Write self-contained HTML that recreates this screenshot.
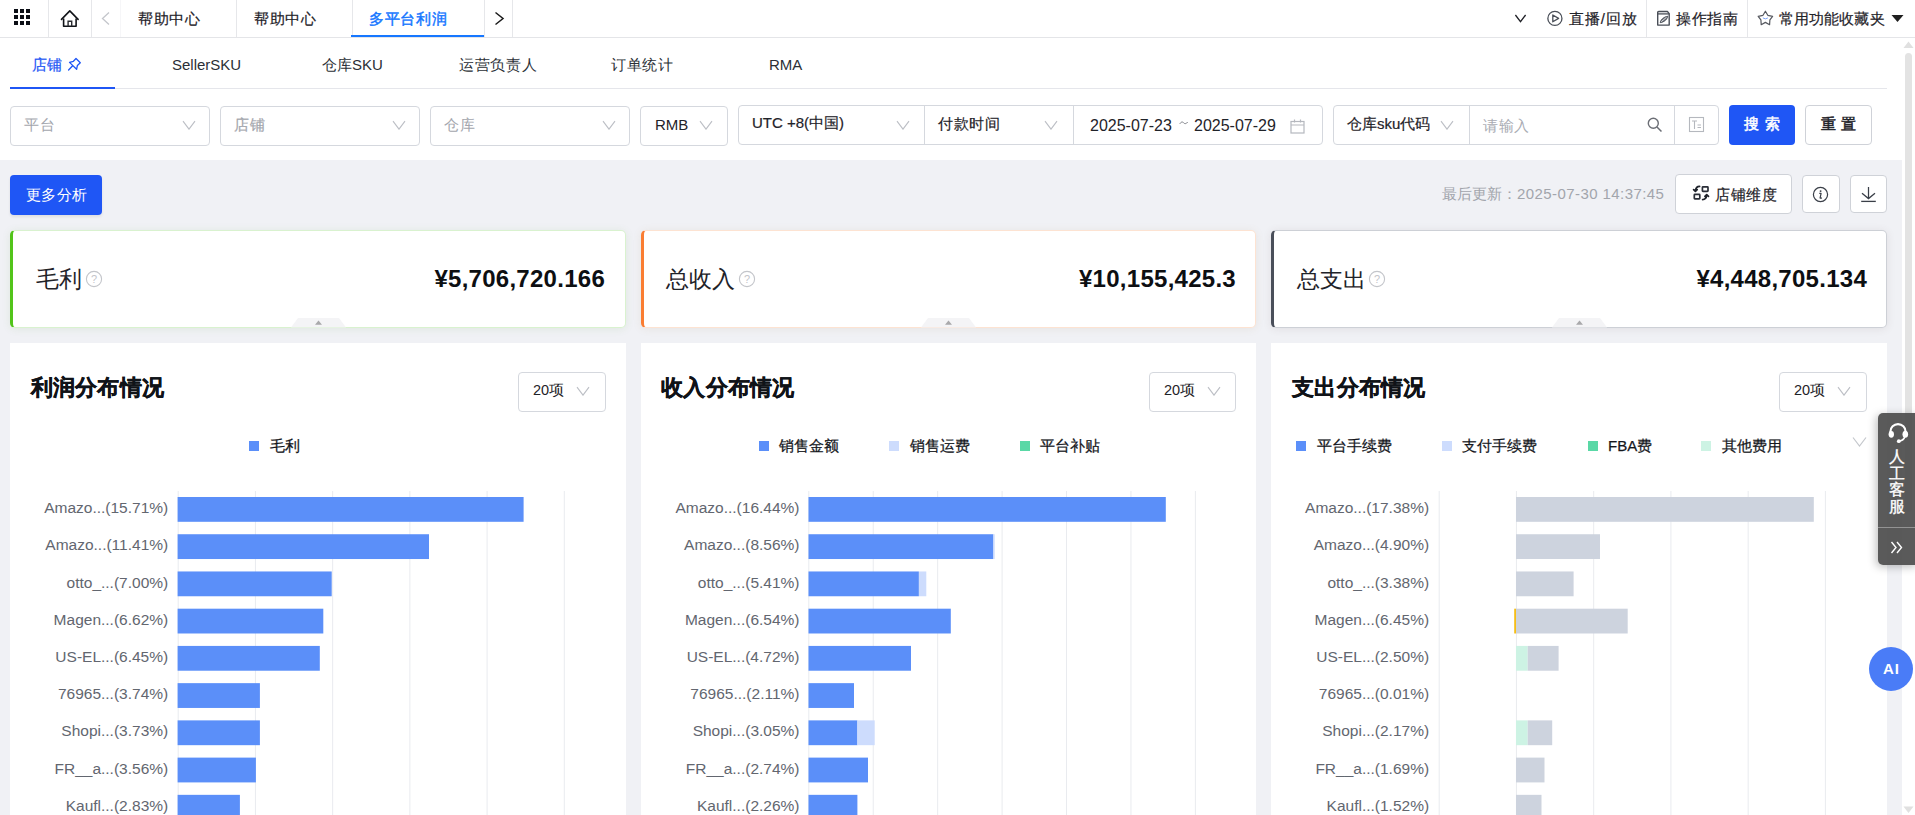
<!DOCTYPE html>
<html><head><meta charset="utf-8">
<style>
*{box-sizing:border-box;margin:0;padding:0}
html,body{width:1915px;height:815px;overflow:hidden;background:#fff;font-family:"Liberation Sans",sans-serif;color:#1f2329}
.a{position:absolute}
.t{position:absolute;white-space:nowrap}
.s2{-webkit-text-stroke-width:0.2px}
.s4{-webkit-text-stroke-width:0.45px}
.vl{position:absolute;width:1px;background:#e6e7ea}
.sel{position:absolute;border:1px solid #d5d8de;border-radius:4px;background:#fff}
.chev{position:absolute}
.card{position:absolute;top:230px;height:98px;background:#fff;border-radius:5px;box-shadow:0 1px 9px rgba(0,0,0,.08)}
.panel{position:absolute;top:343px;height:480px;background:#fff}
.lbl{position:absolute;white-space:nowrap;font-size:15.5px;line-height:15px;color:#62666f;text-align:right}
.lg{position:absolute;width:10px;height:10px}
.lgt{position:absolute;white-space:nowrap;font-size:15px;line-height:15px;color:#15171c;-webkit-text-stroke-width:0.25px}
</style></head><body>

<!-- page gray background -->
<div class="a" style="left:0;top:160px;width:1902px;height:655px;background:#f0f1f5"></div>

<!-- ===== TOP BAR ===== -->
<div class="a" style="left:0;top:0;width:1915px;height:38px;background:#fff;border-bottom:1px solid #e4e5e8"></div>
<svg class="a" style="left:13px;top:8px" width="18" height="18" viewBox="0 0 18 18"><g fill="#0b0e15"><rect x="1" y="1" width="4" height="4"/><rect x="7" y="1" width="4" height="4"/><rect x="13" y="1" width="4" height="4"/><rect x="1" y="7" width="4" height="4"/><rect x="7" y="7" width="4" height="4"/><rect x="13" y="7" width="4" height="4"/><rect x="1" y="13" width="4" height="4"/><rect x="7" y="13" width="4" height="4"/><rect x="13" y="13" width="4" height="4"/></g></svg>
<div class="vl" style="left:48px;top:0;height:37px"></div>
<svg class="a" style="left:60px;top:9px" width="20" height="19" viewBox="0 0 20 19"><path d="M1.5 10.4 L9.8 1.9 L18.1 10.4" fill="none" stroke="#111318" stroke-width="1.6" stroke-linecap="round" stroke-linejoin="round"/><path d="M3.6 9.4 V17.2 H16.1 V9.4" fill="none" stroke="#111318" stroke-width="1.6" stroke-linejoin="round"/><path d="M8.1 17.2 V12.3 H11.7 V17.2" fill="none" stroke="#2a2c31" stroke-width="1.4"/></svg>
<div class="vl" style="left:91px;top:0;height:37px"></div>
<svg class="a" style="left:100px;top:11px" width="11" height="15" viewBox="0 0 11 15"><path d="M9 1.5 L2.5 7.5 L9 13.5" fill="none" stroke="#c4c6cb" stroke-width="1.3"/></svg>
<div class="vl" style="left:120px;top:0;height:37px;background:#f6f6f8"></div>
<div class="t s2" style="left:138px;top:11px;font-size:15px;line-height:16px;letter-spacing:0.7px;color:#1f2329">帮助中心</div>
<div class="vl" style="left:236px;top:0;height:37px"></div>
<div class="t s2" style="left:254px;top:11px;font-size:15px;line-height:16px;letter-spacing:0.7px;color:#1f2329">帮助中心</div>
<div class="vl" style="left:352px;top:0;height:37px"></div>
<div class="t s4" style="left:369px;top:11px;font-size:15px;line-height:16px;letter-spacing:0.7px;color:#1677ff">多平台利润</div>
<div class="a" style="left:351px;top:35px;width:133px;height:2px;background:#1677ff"></div>
<div class="vl" style="left:484px;top:0;height:37px"></div>
<svg class="a" style="left:493px;top:11px" width="13" height="15" viewBox="0 0 13 15"><path d="M2.5 1.5 L10 7.5 L2.5 13.5" fill="none" stroke="#1a1a1a" stroke-width="1.5"/></svg>
<div class="vl" style="left:512px;top:0;height:37px"></div>

<!-- right top -->
<svg class="a" style="left:1514px;top:13px" width="14" height="10" viewBox="0 0 14 10"><path d="M1.4 2 L6.5 8.6 L11.6 2" fill="none" stroke="#1f2026" stroke-width="1.3"/></svg>
<svg class="a" style="left:1546px;top:10px" width="18" height="18" viewBox="0 0 18 18"><circle cx="8.9" cy="8.4" r="7.05" fill="none" stroke="#4a4f58" stroke-width="1.3"/><path d="M6.8 5 L12.6 8.4 L6.8 11.8 Z" fill="none" stroke="#4a4f58" stroke-width="1.3" stroke-linejoin="round"/></svg>
<div class="t s2" style="left:1569px;top:11px;font-size:15px;line-height:16px;letter-spacing:0.9px;color:#1f2329">直播/回放</div>
<div class="vl" style="left:1646px;top:0;height:37px"></div>
<svg class="a" style="left:1656px;top:10px" width="15" height="17" viewBox="0 0 15 17"><path d="M1.7 15.1 V2.5 Q1.7 1.5 2.7 1.5 H11.4 L13.2 3.6 V15.1 Z" fill="none" stroke="#4a4f58" stroke-width="1.4" stroke-linejoin="round"/><path d="M1.7 3.9 H13.2" stroke="#4a4f58" stroke-width="1.3"/><path d="M4.2 12.7 C4.8 9.2 7.8 7 11.7 6.2 C11.1 9.8 8.2 12 4.2 12.7 Z" fill="#6a6e76" stroke="#4a4f58" stroke-width="0.9" stroke-linejoin="round"/><path d="M5.2 11.7 L10.6 7.2" stroke="#fff" stroke-width="0.8"/></svg>
<div class="t s2" style="left:1676px;top:11px;font-size:15px;line-height:16px;letter-spacing:0.7px;color:#1f2329">操作指南</div>
<div class="vl" style="left:1747px;top:0;height:37px"></div>
<svg class="a" style="left:1757px;top:10px" width="17" height="17" viewBox="0 0 17 17"><path d="M8.4 1.2 L10.8 5.3 L15.6 6.3 L12.9 9.8 L12.6 14.7 L8.4 12.4 L4.2 14.7 L3.9 9.8 L1.2 6.3 L6 5.3 Z" fill="none" stroke="#55585f" stroke-width="1.2" stroke-linejoin="round"/><path d="M5.9 7.9 Q8.4 9.9 10.9 7.9" fill="none" stroke="#7ea4f7" stroke-width="1"/></svg>
<div class="t s2" style="left:1779px;top:11px;font-size:15px;line-height:16px;letter-spacing:0.1px;color:#1f2329">常用功能收藏夹</div>
<svg class="a" style="left:1891px;top:14px" width="13" height="9" viewBox="0 0 13 9"><path d="M0.5 1 H12.5 L6.5 8 Z" fill="#1f1f1f"/></svg>

<!-- ===== TABS ===== -->
<div class="a" style="left:10px;top:88px;width:1877px;height:1px;background:#e5e6eb"></div>
<div class="t s2" style="left:32px;top:57px;font-size:15px;line-height:16px;letter-spacing:0.3px;color:#1f56f5">店铺</div>
<svg class="a" style="left:67px;top:57px" width="15" height="15" viewBox="0 0 15 15"><path d="M9 1.5 L13.3 5.7 L10.4 8.4 L9.6 12.3 L2.5 5.4 L6.4 4.3 Z M5.4 9 L1.6 13" fill="none" stroke="#1f56f5" stroke-width="1.3" stroke-linejoin="round" stroke-linecap="round"/></svg>
<div class="a" style="left:10px;top:87px;width:105px;height:2px;background:#1f56f5"></div>
<div class="t" style="left:172px;top:57px;font-size:15px;line-height:16px;color:#2b2f36">SellerSKU</div>
<div class="t" style="left:322px;top:57px;font-size:15px;line-height:16px;color:#2b2f36">仓库SKU</div>
<div class="t" style="left:459px;top:57px;font-size:15px;line-height:16px;letter-spacing:0.7px;color:#2b2f36">运营负责人</div>
<div class="t" style="left:611px;top:57px;font-size:15px;line-height:16px;letter-spacing:0.7px;color:#2b2f36">订单统计</div>
<div class="t" style="left:769px;top:57px;font-size:15px;line-height:16px;color:#2b2f36">RMA</div>

<!-- ===== FILTERS ===== -->
<div class="sel" style="left:10px;top:106px;width:200px;height:40px"></div>
<div class="t" style="left:24px;top:117px;font-size:15px;line-height:16px;letter-spacing:0.5px;color:#a3a6ad">平台</div>
<svg class="chev" style="left:182px;top:119px" width="14" height="11" viewBox="0 0 14 11"><path d="M1 2.2 L7 10.2 L13 2.2" fill="none" stroke="#bcbfc5" stroke-width="1.1"/></svg>
<div class="sel" style="left:220px;top:106px;width:200px;height:40px"></div>
<div class="t s2" style="left:234px;top:117px;font-size:15px;line-height:16px;letter-spacing:0.5px;color:#a3a6ad">店铺</div>
<svg class="chev" style="left:392px;top:119px" width="14" height="11" viewBox="0 0 14 11"><path d="M1 2.2 L7 10.2 L13 2.2" fill="none" stroke="#bcbfc5" stroke-width="1.1"/></svg>
<div class="sel" style="left:430px;top:106px;width:200px;height:40px"></div>
<div class="t" style="left:444px;top:117px;font-size:15px;line-height:16px;letter-spacing:0.5px;color:#a3a6ad">仓库</div>
<svg class="chev" style="left:602px;top:119px" width="14" height="11" viewBox="0 0 14 11"><path d="M1 2.2 L7 10.2 L13 2.2" fill="none" stroke="#bcbfc5" stroke-width="1.1"/></svg>
<div class="sel" style="left:640px;top:106px;width:88px;height:40px"></div>
<div class="t" style="left:655px;top:117px;font-size:15px;line-height:16px;color:#1f2329">RMB</div>
<svg class="chev" style="left:699px;top:119px" width="14" height="11" viewBox="0 0 14 11"><path d="M1 2.2 L7 10.2 L13 2.2" fill="none" stroke="#bcbfc5" stroke-width="1.1"/></svg>

<div class="sel" style="left:738px;top:105px;width:585px;height:40px"></div>
<div class="t s2" style="left:752px;top:115px;font-size:15px;line-height:16px;color:#1f2329">UTC +8(中国)</div>
<svg class="chev" style="left:896px;top:119px" width="14" height="11" viewBox="0 0 14 11"><path d="M1 2.2 L7 10.2 L13 2.2" fill="none" stroke="#bcbfc5" stroke-width="1.1"/></svg>
<div class="vl" style="left:924px;top:106px;height:38px;background:#d5d8de"></div>
<div class="t s2" style="left:938px;top:116px;font-size:15px;line-height:16px;letter-spacing:0.5px;color:#1f2329">付款时间</div>
<svg class="chev" style="left:1044px;top:119px" width="14" height="11" viewBox="0 0 14 11"><path d="M1 2.2 L7 10.2 L13 2.2" fill="none" stroke="#bcbfc5" stroke-width="1.1"/></svg>
<div class="vl" style="left:1073px;top:106px;height:38px;background:#d5d8de"></div>
<div class="t" style="left:1090px;top:118px;font-size:16px;line-height:16px;color:#1f2329">2025-07-23</div>
<svg class="a" style="left:1179px;top:120px" width="10" height="6" viewBox="0 0 10 6"><path d="M0.8 3.9 C2.2 1.5 3.7 1.7 4.6 2.8 C5.5 3.9 7.1 4.2 8.7 2" fill="none" stroke="#7d8087" stroke-width="1"/></svg>
<div class="t" style="left:1194px;top:118px;font-size:16px;line-height:16px;color:#1f2329">2025-07-29</div>
<svg class="a" style="left:1290px;top:119px" width="15" height="15" viewBox="0 0 15 15"><rect x="1" y="2.5" width="13" height="11.5" fill="none" stroke="#b5b8be" stroke-width="1.2"/><path d="M1 6 H14 M4.5 0.5 V3.5 M10.5 0.5 V3.5" stroke="#b5b8be" stroke-width="1.2"/></svg>

<div class="sel" style="left:1333px;top:105px;width:386px;height:40px"></div>
<div class="t s2" style="left:1347px;top:116px;font-size:15px;line-height:16px;color:#1f2329">仓库sku代码</div>
<svg class="chev" style="left:1440px;top:119px" width="14" height="11" viewBox="0 0 14 11"><path d="M1 2.2 L7 10.2 L13 2.2" fill="none" stroke="#bcbfc5" stroke-width="1.1"/></svg>
<div class="vl" style="left:1469px;top:106px;height:38px;background:#d5d8de"></div>
<div class="t" style="left:1483px;top:118px;font-size:15px;line-height:16px;letter-spacing:0.5px;color:#a9acb3">请输入</div>
<svg class="a" style="left:1647px;top:117px" width="16" height="16" viewBox="0 0 16 16"><circle cx="6.3" cy="6.3" r="5" fill="none" stroke="#6b6e75" stroke-width="1.4"/><path d="M10 10 L14.5 14.5" stroke="#6b6e75" stroke-width="1.5"/></svg>
<div class="vl" style="left:1674px;top:106px;height:38px;background:#d5d8de"></div>
<svg class="a" style="left:1688px;top:116px" width="17" height="17" viewBox="0 0 17 17"><rect x="1.5" y="1.5" width="14" height="14" fill="none" stroke="#b5b8be" stroke-width="1.1"/><path d="M4 5 H9 M6.5 5 V13 M9.5 9 H13 M9.5 11.5 H13" stroke="#b5b8be" stroke-width="1.1"/></svg>

<div class="a" style="left:1729px;top:105px;width:66px;height:40px;background:#1f56f5;border-radius:4px"></div>
<div class="t" style="left:1744px;top:116px;font-size:15px;line-height:16px;letter-spacing:6.4px;color:#fff;-webkit-text-stroke-width:0.5px">搜索</div>
<div class="sel" style="left:1805px;top:105px;width:67px;height:40px;border-color:#cfd2d8"></div>
<div class="t" style="left:1821px;top:116px;font-size:15px;line-height:16px;letter-spacing:5px;color:#1f2329;-webkit-text-stroke-width:0.5px">重置</div>

<!-- ===== ACTION ROW ===== -->
<div class="a" style="left:10px;top:175px;width:92px;height:40px;background:#1f56f5;border-radius:4px;box-shadow:0 2px 3px rgba(0,0,0,.08)"></div>
<div class="t" style="left:26px;top:187px;font-size:15px;line-height:16px;letter-spacing:0.3px;color:#fff">更多分析</div>

<div class="t" style="left:1442px;top:186px;font-size:15px;line-height:16px;color:#a2a5ac">最后更新：<span style="letter-spacing:0.42px">2025-07-30 14:37:45</span></div>
<div class="sel" style="left:1675px;top:174px;width:117px;height:40px;border-color:#cfd2d8"></div>
<svg class="a" style="left:1685px;top:180px" width="30" height="30" viewBox="0 0 30 30"><rect x="17.4" y="6.8" width="5.6" height="4.6" rx="0.6" fill="none" stroke="#2b2f38" stroke-width="1.7"/><rect x="9.3" y="14.4" width="5.5" height="4.5" rx="0.6" fill="none" stroke="#2b2f38" stroke-width="1.7"/><path d="M14.6 6.4 C12 6.4 10.7 8 10.4 10.8 M8.6 9.6 L10.4 11.4 L12.2 9.6" fill="none" stroke="#1f232b" stroke-width="1.7" stroke-linecap="round" stroke-linejoin="round"/><path d="M17.6 19.6 C20.2 19.6 21.4 18 21.7 15.2 M19.9 16.4 L21.7 14.6 L23.5 16.4" fill="none" stroke="#1f232b" stroke-width="1.7" stroke-linecap="round" stroke-linejoin="round"/></svg>
<div class="t s2" style="left:1715px;top:187px;font-size:15px;line-height:16px;letter-spacing:0.6px;color:#1f2329">店铺维度</div>
<div class="sel" style="left:1802px;top:175px;width:38px;height:38px;border-color:#cfd2d8"></div>
<svg class="a" style="left:1812px;top:186px" width="18" height="18" viewBox="0 0 18 18"><circle cx="8.5" cy="8.5" r="7.1" fill="none" stroke="#3a3f48" stroke-width="1.2"/><circle cx="8.6" cy="5.1" r="0.95" fill="#3a3f48"/><path d="M7.3 7.4 H9.1 L8.1 11.9 Q8 12.6 9.9 11.9" fill="none" stroke="#3a3f48" stroke-width="1.2" stroke-linejoin="round"/></svg>
<div class="sel" style="left:1850px;top:175px;width:37px;height:38px;border-color:#cfd2d8"></div>
<svg class="a" style="left:1859px;top:184px" width="19" height="19" viewBox="0 0 19 19"><path d="M9.5 3 V14.6 M3 9.2 L9.5 14.6 L16 9.2" fill="none" stroke="#3a3f48" stroke-width="1.25"/><path d="M2.2 17.4 H16.8" stroke="#3a3f48" stroke-width="1.3"/></svg>

<!-- ===== CARDS ===== -->
<div class="card" style="left:10px;width:616px;border:1px solid #d9f2cf;border-left:3px solid #52c41a;box-shadow:0 1px 9px rgba(80,150,40,.10)"></div>
<div class="t" style="left:36px;top:267px;font-size:23px;line-height:24px;color:#1f2329">毛利</div>
<svg class="a" style="left:85px;top:270px" width="18" height="18" viewBox="0 0 18 18"><circle cx="9" cy="9" r="7.6" fill="none" stroke="#c3c5ca" stroke-width="1.1"/><text x="9" y="13" text-anchor="middle" font-size="11" fill="#c3c5ca" font-family="Liberation Sans">?</text></svg>
<div class="t" style="right:1310px;top:266px;font-size:24px;line-height:26px;font-weight:bold;letter-spacing:0.27px;color:#0d0f12">¥5,706,720.166</div>
<svg class="a" style="left:291px;top:318px" width="55" height="10" viewBox="0 0 55 10"><path d="M7 0 H48 L55 9.5 H0 Z" fill="#f4f4f6"/><path d="M24 6.8 L27.5 2.5 L31 6.8 Z" fill="#a9a9ab"/></svg>

<div class="card" style="left:641px;width:615px;border:1px solid #fde3d2;border-left:3px solid #fa7d32;box-shadow:0 1px 9px rgba(160,120,60,.10)"></div>
<div class="t" style="left:666px;top:267px;font-size:23px;line-height:24px;color:#1f2329">总收入</div>
<svg class="a" style="left:738px;top:270px" width="18" height="18" viewBox="0 0 18 18"><circle cx="9" cy="9" r="7.6" fill="none" stroke="#c3c5ca" stroke-width="1.1"/><text x="9" y="13" text-anchor="middle" font-size="11" fill="#c3c5ca" font-family="Liberation Sans">?</text></svg>
<div class="t" style="right:679px;top:266px;font-size:24px;line-height:26px;font-weight:bold;letter-spacing:0.27px;color:#0d0f12">¥10,155,425.3</div>
<svg class="a" style="left:921px;top:318px" width="55" height="10" viewBox="0 0 55 10"><path d="M7 0 H48 L55 9.5 H0 Z" fill="#f4f4f6"/><path d="M24 6.8 L27.5 2.5 L31 6.8 Z" fill="#a9a9ab"/></svg>

<div class="card" style="left:1271px;width:616px;border:1px solid #cdd0d6;border-left:3px solid #4a4f5a;box-shadow:0 1px 9px rgba(90,60,60,.10)"></div>
<div class="t" style="left:1297px;top:267px;font-size:23px;line-height:24px;color:#1f2329">总支出</div>
<svg class="a" style="left:1368px;top:270px" width="18" height="18" viewBox="0 0 18 18"><circle cx="9" cy="9" r="7.6" fill="none" stroke="#c3c5ca" stroke-width="1.1"/><text x="9" y="13" text-anchor="middle" font-size="11" fill="#c3c5ca" font-family="Liberation Sans">?</text></svg>
<div class="t" style="right:48px;top:266px;font-size:24px;line-height:26px;font-weight:bold;letter-spacing:0.27px;color:#0d0f12">¥4,448,705.134</div>
<svg class="a" style="left:1552px;top:318px" width="55" height="10" viewBox="0 0 55 10"><path d="M7 0 H48 L55 9.5 H0 Z" fill="#f4f4f6"/><path d="M24 6.8 L27.5 2.5 L31 6.8 Z" fill="#a9a9ab"/></svg>

<!-- ===== PANELS ===== -->
<div class="panel" style="left:10px;width:616px"></div>
<div class="panel" style="left:641px;width:615px"></div>
<div class="panel" style="left:1271px;width:616px"></div>

<!--CHARTS-->
<div class="t" style="left:30.5px;top:376px;font-size:22px;line-height:24px;font-weight:bold;letter-spacing:0.3px;-webkit-text-stroke-width:0.35px;color:#101318">利润分布情况</div>
<div class="sel" style="left:518px;top:372px;width:88px;height:40px"></div>
<div class="t" style="left:533px;top:382px;font-size:14.5px;line-height:16px;color:#1f2329">20项</div>
<svg class="chev" style="left:576px;top:385px" width="14" height="11" viewBox="0 0 14 11"><path d="M1 2.2 L7 10.2 L13 2.2" fill="none" stroke="#bcbfc5" stroke-width="1.1"/></svg>
<div class="lg" style="left:249px;top:441px;background:#5b8ff9"></div>
<div class="lgt" style="left:270px;top:438px;letter-spacing:0px">毛利</div>
<svg class="a" style="left:170px;top:480px" width="456" height="335" viewBox="170 480 456 335">
<rect x="177.70" y="491" width="1" height="330" fill="#e9ebef"/>
<rect x="254.92" y="491" width="1" height="330" fill="#e9ebef"/>
<rect x="332.14" y="491" width="1" height="330" fill="#e9ebef"/>
<rect x="409.36" y="491" width="1" height="330" fill="#e9ebef"/>
<rect x="486.58" y="491" width="1" height="330" fill="#e9ebef"/>
<rect x="563.80" y="491" width="1" height="330" fill="#e9ebef"/>
<rect x="177.60" y="497.00" width="346.00" height="24.8" fill="#5b8ff9"/>
<rect x="177.60" y="534.23" width="251.40" height="24.8" fill="#5b8ff9"/>
<rect x="177.60" y="571.46" width="154.10" height="24.8" fill="#5b8ff9"/>
<rect x="177.60" y="608.69" width="145.70" height="24.8" fill="#5b8ff9"/>
<rect x="177.60" y="645.92" width="142.20" height="24.8" fill="#5b8ff9"/>
<rect x="177.60" y="683.15" width="82.30" height="24.8" fill="#5b8ff9"/>
<rect x="177.60" y="720.38" width="82.30" height="24.8" fill="#5b8ff9"/>
<rect x="177.60" y="757.61" width="78.30" height="24.8" fill="#5b8ff9"/>
<rect x="177.60" y="794.84" width="62.30" height="24.8" fill="#5b8ff9"/>
</svg>
<div class="lbl" style="right:1746.8px;top:500.0px">Amazo...(15.71%)</div>
<div class="lbl" style="right:1746.8px;top:537.2px">Amazo...(11.41%)</div>
<div class="lbl" style="right:1746.8px;top:574.5px">otto_...(7.00%)</div>
<div class="lbl" style="right:1746.8px;top:611.7px">Magen...(6.62%)</div>
<div class="lbl" style="right:1746.8px;top:648.9px">US-EL...(6.45%)</div>
<div class="lbl" style="right:1746.8px;top:686.1px">76965...(3.74%)</div>
<div class="lbl" style="right:1746.8px;top:723.4px">Shopi...(3.73%)</div>
<div class="lbl" style="right:1746.8px;top:760.6px">FR__a...(3.56%)</div>
<div class="lbl" style="right:1746.8px;top:797.8px">Kaufl...(2.83%)</div>
<div class="t" style="left:661px;top:376px;font-size:22px;line-height:24px;font-weight:bold;letter-spacing:0.3px;-webkit-text-stroke-width:0.35px;color:#101318">收入分布情况</div>
<div class="sel" style="left:1149px;top:372px;width:87px;height:40px"></div>
<div class="t" style="left:1164px;top:382px;font-size:14.5px;line-height:16px;color:#1f2329">20项</div>
<svg class="chev" style="left:1207px;top:385px" width="14" height="11" viewBox="0 0 14 11"><path d="M1 2.2 L7 10.2 L13 2.2" fill="none" stroke="#bcbfc5" stroke-width="1.1"/></svg>
<div class="lg" style="left:759px;top:441px;background:#5b8ff9"></div>
<div class="lgt" style="left:779px;top:438px;letter-spacing:0px">销售金额</div>
<div class="lg" style="left:889px;top:441px;background:#cddcfd"></div>
<div class="lgt" style="left:910px;top:438px;letter-spacing:0px">销售运费</div>
<div class="lg" style="left:1020px;top:441px;background:#5ad8a6"></div>
<div class="lgt" style="left:1040px;top:438px;letter-spacing:0px">平台补贴</div>
<svg class="a" style="left:800px;top:480px" width="456" height="335" viewBox="800 480 456 335">
<rect x="808.30" y="491" width="1" height="330" fill="#e9ebef"/>
<rect x="872.73" y="491" width="1" height="330" fill="#e9ebef"/>
<rect x="937.16" y="491" width="1" height="330" fill="#e9ebef"/>
<rect x="1001.59" y="491" width="1" height="330" fill="#e9ebef"/>
<rect x="1066.02" y="491" width="1" height="330" fill="#e9ebef"/>
<rect x="1130.45" y="491" width="1" height="330" fill="#e9ebef"/>
<rect x="1194.88" y="491" width="1" height="330" fill="#e9ebef"/>
<rect x="808.50" y="497.00" width="357.30" height="24.8" fill="#5b8ff9"/>
<rect x="808.50" y="534.23" width="184.90" height="24.8" fill="#5b8ff9"/>
<rect x="993.40" y="534.23" width="1.30" height="24.8" fill="#cddcfd"/>
<rect x="808.50" y="571.46" width="110.40" height="24.8" fill="#5b8ff9"/>
<rect x="918.90" y="571.46" width="7.40" height="24.8" fill="#cddcfd"/>
<rect x="808.50" y="608.69" width="142.30" height="24.8" fill="#5b8ff9"/>
<rect x="808.50" y="645.92" width="102.50" height="24.8" fill="#5b8ff9"/>
<rect x="808.50" y="683.15" width="45.50" height="24.8" fill="#5b8ff9"/>
<rect x="808.50" y="720.38" width="48.90" height="24.8" fill="#5b8ff9"/>
<rect x="857.40" y="720.38" width="17.30" height="24.8" fill="#cddcfd"/>
<rect x="808.50" y="757.61" width="59.50" height="24.8" fill="#5b8ff9"/>
<rect x="808.50" y="794.84" width="48.90" height="24.8" fill="#5b8ff9"/>
</svg>
<div class="lbl" style="right:1115.5px;top:500.0px">Amazo...(16.44%)</div>
<div class="lbl" style="right:1115.5px;top:537.2px">Amazo...(8.56%)</div>
<div class="lbl" style="right:1115.5px;top:574.5px">otto_...(5.41%)</div>
<div class="lbl" style="right:1115.5px;top:611.7px">Magen...(6.54%)</div>
<div class="lbl" style="right:1115.5px;top:648.9px">US-EL...(4.72%)</div>
<div class="lbl" style="right:1115.5px;top:686.1px">76965...(2.11%)</div>
<div class="lbl" style="right:1115.5px;top:723.4px">Shopi...(3.05%)</div>
<div class="lbl" style="right:1115.5px;top:760.6px">FR__a...(2.74%)</div>
<div class="lbl" style="right:1115.5px;top:797.8px">Kaufl...(2.26%)</div>
<div class="t" style="left:1292px;top:376px;font-size:22px;line-height:24px;font-weight:bold;letter-spacing:0.3px;-webkit-text-stroke-width:0.35px;color:#101318">支出分布情况</div>
<div class="sel" style="left:1779px;top:372px;width:88px;height:40px"></div>
<div class="t" style="left:1794px;top:382px;font-size:14.5px;line-height:16px;color:#1f2329">20项</div>
<svg class="chev" style="left:1837px;top:385px" width="14" height="11" viewBox="0 0 14 11"><path d="M1 2.2 L7 10.2 L13 2.2" fill="none" stroke="#bcbfc5" stroke-width="1.1"/></svg>
<div class="lg" style="left:1296px;top:441px;background:#5b8ff9"></div>
<div class="lgt" style="left:1317px;top:438px;letter-spacing:0px">平台手续费</div>
<div class="lg" style="left:1442px;top:441px;background:#cddcfd"></div>
<div class="lgt" style="left:1462px;top:438px;letter-spacing:0px">支付手续费</div>
<div class="lg" style="left:1588px;top:441px;background:#5ad8a6"></div>
<div class="lgt" style="left:1608px;top:438px;letter-spacing:0px">FBA费</div>
<div class="lg" style="left:1701px;top:441px;background:#cdf3e4"></div>
<div class="lgt" style="left:1722px;top:438px;letter-spacing:0px">其他费用</div>
<svg class="chev" style="left:1852px;top:436px" width="15" height="12" viewBox="0 0 15 12"><path d="M1 1.5 L7.5 10 L14 1.5" fill="none" stroke="#c4c7cc" stroke-width="1.2"/></svg>
<svg class="a" style="left:1430px;top:480px" width="457" height="335" viewBox="1430 480 457 335">
<rect x="1438.70" y="491" width="1" height="330" fill="#e9ebef"/>
<rect x="1515.94" y="491" width="1" height="330" fill="#e9ebef"/>
<rect x="1593.18" y="491" width="1" height="330" fill="#e9ebef"/>
<rect x="1670.42" y="491" width="1" height="330" fill="#e9ebef"/>
<rect x="1747.66" y="491" width="1" height="330" fill="#e9ebef"/>
<rect x="1824.90" y="491" width="1" height="330" fill="#e9ebef"/>
<rect x="1516.00" y="497.00" width="297.80" height="24.8" fill="#cdd3de"/>
<rect x="1516.00" y="534.23" width="84.00" height="24.8" fill="#cdd3de"/>
<rect x="1516.00" y="571.46" width="57.60" height="24.8" fill="#cdd3de"/>
<rect x="1514.20" y="608.69" width="1.80" height="24.8" fill="#f6bd16"/>
<rect x="1516.00" y="608.69" width="111.70" height="24.8" fill="#cdd3de"/>
<rect x="1516.00" y="645.92" width="11.70" height="24.8" fill="#cdf3e4"/>
<rect x="1527.70" y="645.92" width="30.90" height="24.8" fill="#cdd3de"/>
<rect x="1516.00" y="720.38" width="11.70" height="24.8" fill="#cdf3e4"/>
<rect x="1527.70" y="720.38" width="24.50" height="24.8" fill="#cdd3de"/>
<rect x="1516.00" y="757.61" width="28.50" height="24.8" fill="#cdd3de"/>
<rect x="1516.00" y="794.84" width="25.50" height="24.8" fill="#cdd3de"/>
</svg>
<div class="lbl" style="right:485.9px;top:500.0px">Amazo...(17.38%)</div>
<div class="lbl" style="right:485.9px;top:537.2px">Amazo...(4.90%)</div>
<div class="lbl" style="right:485.9px;top:574.5px">otto_...(3.38%)</div>
<div class="lbl" style="right:485.9px;top:611.7px">Magen...(6.45%)</div>
<div class="lbl" style="right:485.9px;top:648.9px">US-EL...(2.50%)</div>
<div class="lbl" style="right:485.9px;top:686.1px">76965...(0.01%)</div>
<div class="lbl" style="right:485.9px;top:723.4px">Shopi...(2.17%)</div>
<div class="lbl" style="right:485.9px;top:760.6px">FR__a...(1.69%)</div>
<div class="lbl" style="right:485.9px;top:797.8px">Kaufl...(1.52%)</div>
<!--/CHARTS--><!--/CHARTS--><!--/CHARTS--><!--/CHARTS--><!--/CHARTS--><!--/CHARTS-->

<!-- ===== SCROLLBAR ===== -->
<div class="a" style="left:1902px;top:38px;width:13px;height:777px;background:#fff"></div>
<svg class="a" style="left:1903px;top:41px" width="11" height="8" viewBox="0 0 11 8"><path d="M5.5 0.5 L10.5 7 H0.5 Z" fill="#e0e0e0"/></svg>
<div class="a" style="left:1905px;top:53px;width:7px;height:459px;background:#e3e3e3;border-radius:4px"></div>
<svg class="a" style="left:1903px;top:806px" width="11" height="8" viewBox="0 0 11 8"><path d="M0.5 0.5 H10.5 L5.5 7 Z" fill="#e0e0e0"/></svg>

<!-- floating service -->
<div class="a" style="left:1878px;top:413px;width:40px;height:152px;background:rgba(72,72,72,.9);border-radius:5px 0 0 5px;box-shadow:-2px 2px 8px rgba(0,0,0,.25)"></div>
<svg class="a" style="left:1887px;top:421px" width="23" height="23" viewBox="0 0 23 23"><path d="M3.4 12 V10.7 A7.6 7.6 0 0 1 18.6 10.7 V12" fill="none" stroke="#fff" stroke-width="2.1"/><ellipse cx="4.3" cy="13.3" rx="2.7" ry="3.4" fill="#fff"/><ellipse cx="18.3" cy="13.2" rx="2.8" ry="3.5" fill="#fff"/><path d="M17.8 15.5 Q17 19.2 12.4 20.1" fill="none" stroke="#fff" stroke-width="1.5"/><circle cx="11.8" cy="20.2" r="1.9" fill="#fff"/></svg>
<div class="t" style="left:1888px;top:449px;width:17px;font-size:16px;line-height:16.6px;-webkit-text-stroke:0.3px #fff;white-space:normal;color:#fff;text-align:center">人工客服</div>
<div class="a" style="left:1878px;top:527px;width:37px;height:1px;background:rgba(255,255,255,.35)"></div>
<svg class="a" style="left:1889px;top:540px" width="15" height="15" viewBox="0 0 15 15"><path d="M2.5 2 L7 7.5 L2.5 13 M8 2 L12.5 7.5 L8 13" fill="none" stroke="#fff" stroke-width="1.4"/></svg>

<div class="a" style="left:1869px;top:647px;width:44px;height:44px;border-radius:50%;background:#4a7cf7"></div>
<div class="t" style="left:1883px;top:662px;font-size:15px;line-height:14px;font-weight:bold;letter-spacing:1px;color:#fff">AI</div>

</body></html>
